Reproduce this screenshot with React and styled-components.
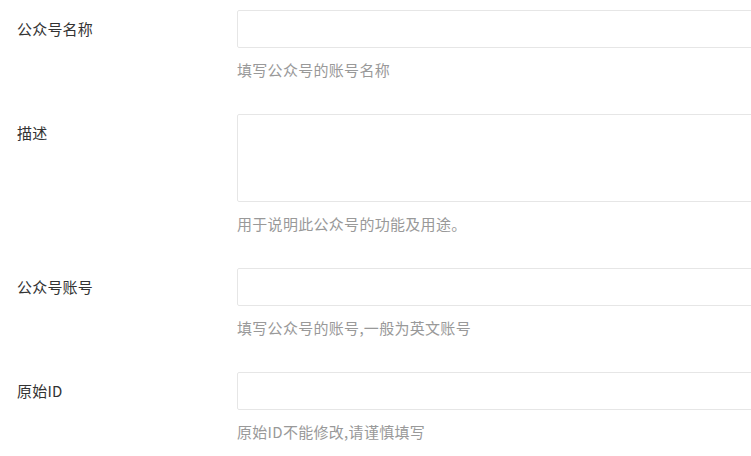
import React from "react";
import styled, { createGlobalStyle } from "styled-components";

const Global = createGlobalStyle`
  html, body { margin: 0; padding: 0; background: #fff; overflow: hidden; }
  body { font-family: "Noto Sans CJK SC", "Microsoft YaHei", sans-serif; }
`;

const Form = styled.form`
  padding: 10px 0 0 17px;
  width: 751px;
  box-sizing: border-box;
  overflow: hidden;
`;

const Group = styled.div`
  display: grid;
  grid-template-columns: 220px minmax(0, 1fr);
  margin-bottom: 34px;
`;

const Label = styled.label`
  font-size: 15px;
  color: #333;
  line-height: 38px;
  height: 38px;
  letter-spacing: 0.2px;
`;

const Control = styled.div`
  display: flex;
  flex-direction: column;
  min-width: 0;
  overflow: hidden;
`;

const Input = styled.input`
  box-sizing: border-box;
  flex: none;
  width: 600px;
  height: 38px;
  border: 1px solid #e6e6e6;
  border-radius: 2px;
  padding: 0 10px;
  font: inherit;
  font-size: 15px;
  outline: none;
  background: #fff;
`;

const TextArea = styled.textarea`
  box-sizing: border-box;
  flex: none;
  width: 600px;
  height: 88px;
  border: 1px solid #e6e6e6;
  border-radius: 2px;
  padding: 6px 10px;
  font: inherit;
  font-size: 15px;
  outline: none;
  resize: none;
  display: block;
`;

const Help = styled.div`
  margin-top: 12px;
  font-size: 15px;
  line-height: 20px;
  color: #999;
  letter-spacing: 0.3px;
  white-space: nowrap;
`;

const fields = [
  { label: "公众号名称", help: "填写公众号的账号名称" },
  { label: "描述", help: "用于说明此公众号的功能及用途。", area: true },
  { label: "公众号账号", help: "填写公众号的账号,一般为英文账号" },
  { label: "原始ID", help: "原始ID不能修改,请谨慎填写" },
];

export default function App() {
  return (
    <>
      <Global />
      <Form>
        {fields.map((f) => (
          <Group key={f.label}>
            <Label>{f.label}</Label>
            <Control>
              {f.area ? <TextArea /> : <Input />}
              <Help>{f.help}</Help>
            </Control>
          </Group>
        ))}
      </Form>
    </>
  );
}
